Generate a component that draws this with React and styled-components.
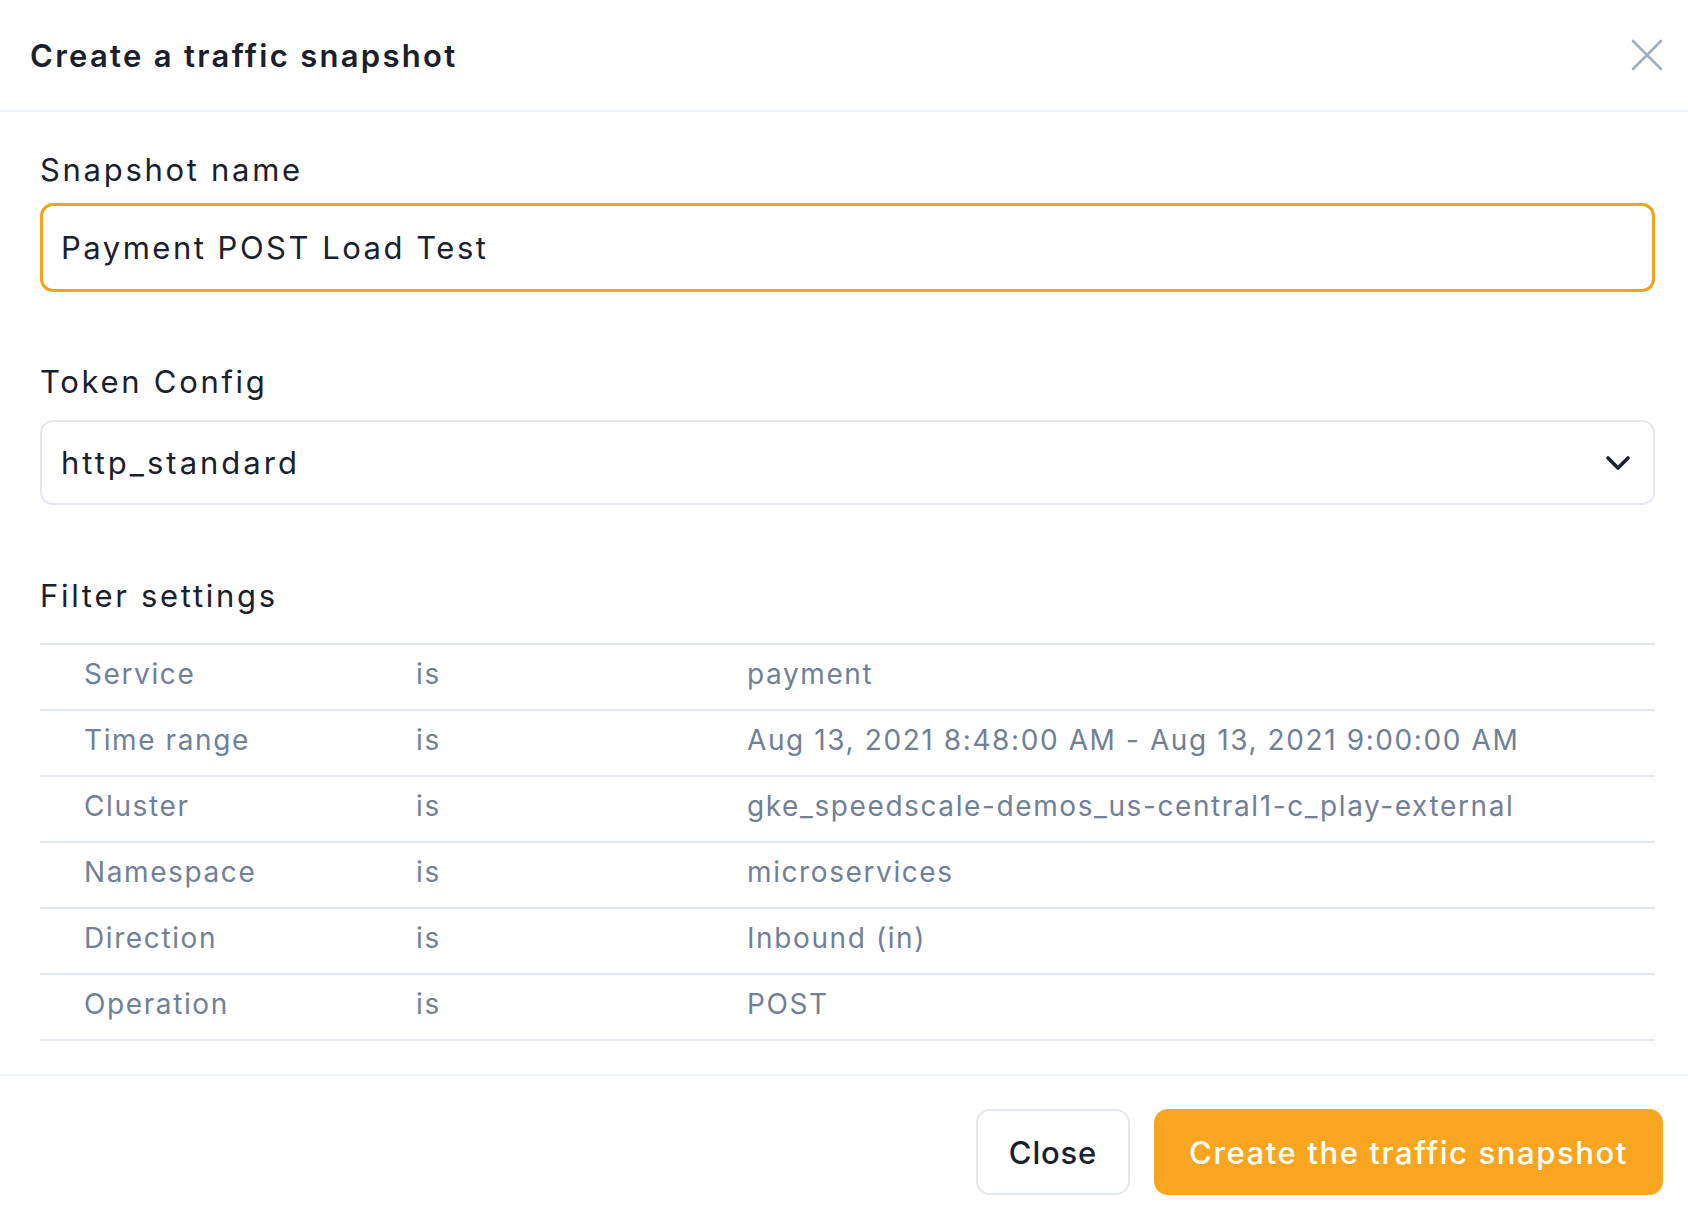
import React from 'react';
import styled, { createGlobalStyle } from 'styled-components';

const GlobalStyle = createGlobalStyle`
  * {
    box-sizing: border-box;
  }

  body {
    margin: 0;
    background: #ffffff;
    font-family: Inter, "Open Sans", "Liberation Sans", sans-serif;
    color: #1a202c;
  }
`;

const Modal = styled.div`
  width: 100%;
  min-height: 1226px;
  display: flex;
  flex-direction: column;
  background: #ffffff;
`;

const Header = styled.header`
  height: 112px;
  display: flex;
  align-items: center;
  justify-content: space-between;
  padding: 0 25px 0 30px;
  border-bottom: 2px solid #edf2f7;
`;

const Title = styled.h2`
  margin: 0;
  font-size: 31px;
  font-weight: 600;
  letter-spacing: 2.3px;
  color: #1a202c;
`;

const CloseIcon = styled.button`
  width: 32px;
  height: 32px;
  padding: 0;
  border: none;
  background: none;
  cursor: pointer;
  display: flex;
  align-items: center;
  justify-content: center;
`;

const Body = styled.div`
  padding: 38px 33px 33px 40px;
  display: flex;
  flex-direction: column;
`;

const Label = styled.label`
  display: block;
  font-size: 31px;
  line-height: 40px;
  letter-spacing: 2.7px;
  color: #1a202c;
  margin-bottom: ${(p) => p.$gap || 13}px;
`;

const TextInput = styled.input`
  width: 100%;
  height: 89px;
  padding: 0 18px;
  border: 3px solid #f8a11c;
  border-radius: 13px;
  font-family: inherit;
  font-size: 31px;
  letter-spacing: 2.5px;
  color: #1a202c;
  background: #ffffff;
  outline: none;
`;

const Select = styled.div`
  width: 100%;
  height: 85px;
  padding: 0 22px 0 19px;
  border: 2px solid #e2e8f0;
  border-radius: 13px;
  display: flex;
  align-items: center;
  justify-content: space-between;
  font-size: 31px;
  letter-spacing: 3px;
  color: #1a202c;
  background: #ffffff;
`;

const Section = styled.div`
  margin-top: ${(p) => p.$top}px;
`;

const Table = styled.div`
  border-top: 2px solid #e2e8f0;
`;

const Row = styled.div`
  height: 66px;
  display: grid;
  grid-template-columns: 332px 331px 1fr;
  align-items: center;
  padding: 0 0 6px 44px;
  border-bottom: 2px solid #e2e8f0;
  font-size: 28px;
  letter-spacing: 1.6px;
  color: #718096;
`;

const Footer = styled.footer`
  border-top: 2px solid #edf2f7;
  padding: 33px 25px 0;
  display: flex;
  justify-content: flex-end;
  gap: 24px;
`;

const Button = styled.button`
  height: 86px;
  padding: 0 ${(p) => (p.$primary ? 33 : 31)}px;
  border-radius: 14px;
  border: 2px solid ${(p) => (p.$primary ? '#f9a51f' : '#e2e8f0')};
  background: ${(p) => (p.$primary ? '#f9a51f' : '#ffffff')};
  color: ${(p) => (p.$primary ? '#ffffff' : '#1a202c')};
  font-family: inherit;
  font-size: 31px;
  font-weight: 500;
  letter-spacing: ${(p) => (p.$primary ? 1.6 : 0.8)}px;
  cursor: pointer;
`;

const filters = [
  ['Service', 'is', 'payment'],
  ['Time range', 'is', 'Aug 13, 2021 8:48:00 AM - Aug 13, 2021 9:00:00 AM'],
  ['Cluster', 'is', 'gke_speedscale-demos_us-central1-c_play-external'],
  ['Namespace', 'is', 'microservices'],
  ['Direction', 'is', 'Inbound (in)'],
  ['Operation', 'is', 'POST'],
];

const App = () => {
  return (
    <>
      <GlobalStyle />
      <Modal>
        <Header>
          <Title>Create a traffic snapshot</Title>
          <CloseIcon aria-label="Close">
            <svg width="32" height="32" viewBox="0 0 32 32">
              <path
                d="M2 2 L30 30 M30 2 L2 30"
                stroke="#a0aec0"
                strokeWidth="2.6"
                strokeLinecap="round"
                fill="none"
              />
            </svg>
          </CloseIcon>
        </Header>

        <Body>
          <Label>Snapshot name</Label>
          <TextInput defaultValue="Payment POST Load Test" />

          <Section $top={70}>
            <Label $gap={18}>Token Config</Label>
            <Select>
              <span>http_standard</span>
              <svg width="26" height="16" viewBox="0 0 26 16">
                <path
                  d="M3 3 L13 13 L23 3"
                  stroke="#1a202c"
                  strokeWidth="3.6"
                  strokeLinecap="round"
                  strokeLinejoin="round"
                  fill="none"
                />
              </svg>
            </Select>
          </Section>

          <Section $top={71}>
            <Label $gap={27}>Filter settings</Label>
            <Table>
              {filters.map(([name, op, value]) => (
                <Row key={name}>
                  <span>{name}</span>
                  <span>{op}</span>
                  <span>{value}</span>
                </Row>
              ))}
            </Table>
          </Section>
        </Body>

        <Footer>
          <Button>Close</Button>
          <Button $primary>Create the traffic snapshot</Button>
        </Footer>
      </Modal>
    </>
  );
};

export default App;
